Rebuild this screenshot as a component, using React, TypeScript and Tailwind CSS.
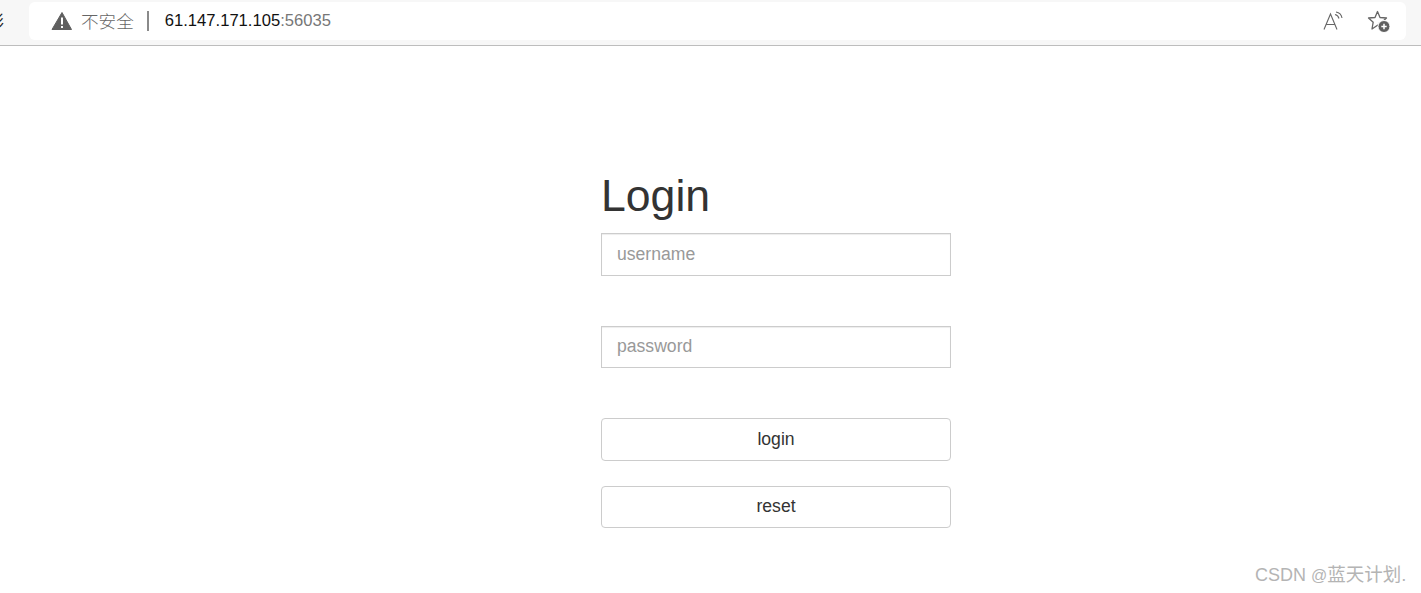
export default function App() {
  const sans = { fontFamily: '"Liberation Sans", Arial, "Noto Sans CJK SC", sans-serif' };
  return (
    <div className="relative h-[593px] w-[1421px] overflow-hidden bg-white" style={sans}>
      <div className="relative flex h-[46px] items-start border-b border-[#bdbdbd] bg-[#f7f7f7] pt-[2px] pl-[29px] pr-[15px]">
        <span className="absolute left-[-12px] top-[12px] text-[16px] leading-[20px] text-[#222]">彤</span>
        <div className="flex h-[38px] flex-1 items-center rounded-[6px] bg-white pl-[22px] pr-[15px]">
          <svg width="22" height="20" viewBox="0 0 22 20" className="shrink-0">
            <path d="M11 1.5 L20.5 18.5 H1 Z" fill="#5f5f5f" stroke="#5f5f5f" strokeLinejoin="round" />
            <rect x="10" y="6.5" width="2" height="7" fill="#fff" />
            <rect x="10" y="15" width="2" height="2" fill="#fff" />
          </svg>
          <span className="ml-[8px] text-[17.6px] leading-[20px] text-[#666]" style={{ fontFamily: '"Noto Sans CJK SC", sans-serif', fontWeight: 300 }}>不安全</span>
          <span className="ml-[13px] h-[20px] w-[2px] bg-[#8a8a8a]" />
          <span className="ml-[16px] text-[16.6px] leading-[20px] text-[#111]">61.147.171.105<span className="text-[#777]">:56035</span></span>
          <div className="ml-auto flex items-center gap-[22px]">
            <svg width="22" height="20" viewBox="0 0 22 20" fill="none" stroke="#666" strokeWidth="1.1">
              <path d="M1 18.5 L7.5 3 L14 18.5 M3.2 13.5 H11.8" />
              <path d="M12 3.5 C14 4 15.5 5.5 16 7.5 M13 1 C16 1.5 18.5 4 19 7" />
            </svg>
            <svg width="24" height="24" viewBox="0 0 24 24" fill="none">
              <path d="M10.5 2.5 L13 8.5 L19.5 9 L14.8 13.2 L16 19 L10.5 16.2 L5 20 L6.2 13.2 L1.5 9 L8 8.5 Z" stroke="#666" strokeWidth="1.3" strokeLinejoin="round" />
              <circle cx="17" cy="17.5" r="6" fill="#5f5f5f" stroke="#fff" strokeWidth="1" />
              <path d="M17 14.8 V20.2 M14.3 17.5 H19.7" stroke="#fff" strokeWidth="1.5" />
            </svg>
          </div>
        </div>
      </div>

      <div className="ml-[601px] w-[350px] pt-[123px]">
        <h1 className="text-[44.6px] leading-[54px] font-normal text-[#333]">Login</h1>
        <div className="mt-[10px] flex flex-col">
          <input placeholder="username" className="h-[43px] w-full border border-[#ccc] px-[15px] text-[17.6px] text-[#555] shadow-[inset_0_1px_1px_rgba(0,0,0,0.075)] outline-none placeholder:text-[#999]" />
          <input placeholder="password" className="mt-[50px] h-[42px] w-full border border-[#ccc] px-[15px] pb-[2px] text-[17.6px] text-[#555] shadow-[inset_0_1px_1px_rgba(0,0,0,0.075)] outline-none placeholder:text-[#999]" />
          <button className="mt-[50px] h-[43px] w-full rounded-[4px] border border-[#ccc] bg-white text-[17.6px] text-[#333]">login</button>
          <button className="mt-[25px] h-[42px] w-full rounded-[4px] border border-[#ccc] bg-white pb-[2px] text-[17.6px] text-[#333]">reset</button>
        </div>
      </div>

      <div className="absolute left-[1255px] top-[563px] text-[18px] leading-[24px] text-[#b4b4b4]" style={{ fontFamily: '"Liberation Sans", "Noto Sans CJK SC", sans-serif' }}>CSDN <span className="text-[16px]">@</span><span className="text-[18.5px]">蓝天计划.</span></div>
    </div>
  );
}
